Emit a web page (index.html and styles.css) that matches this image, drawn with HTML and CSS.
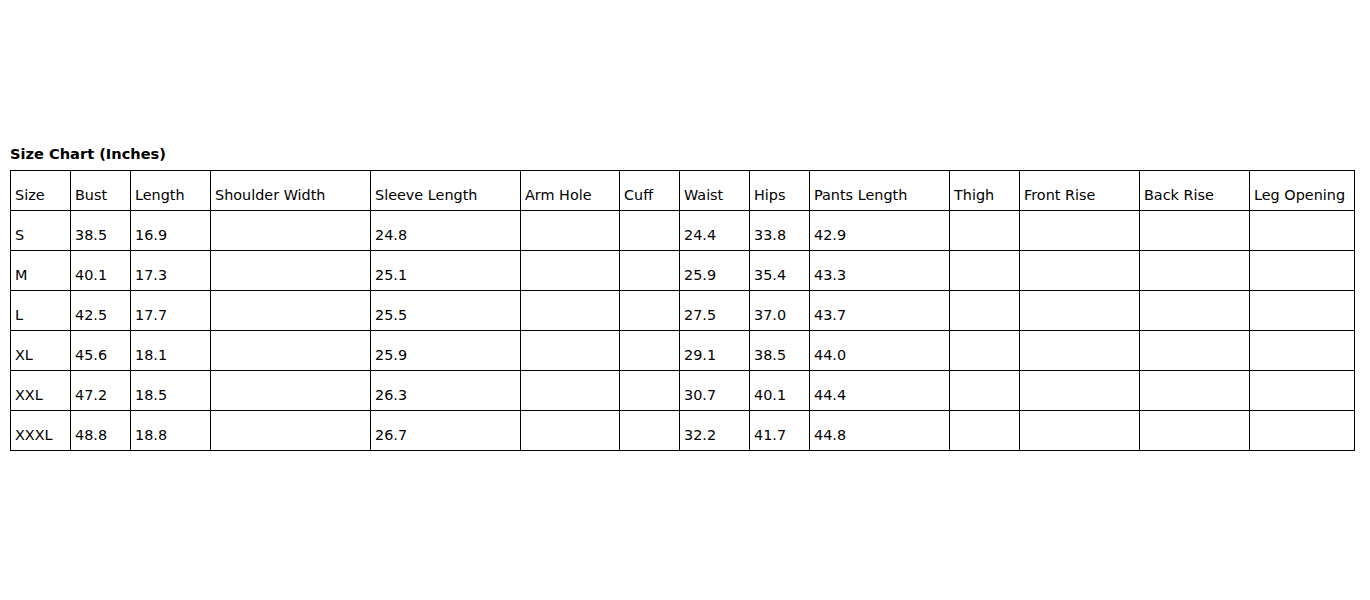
FILE: index.html
```html
<!DOCTYPE html>
<html>
<head>
<meta charset="utf-8">
<link rel="stylesheet" href="styles.css">
</head>
<body>
<div class="page">
  <div class="title">Size Chart (Inches)</div>
  <table class="chart">
    <colgroup>
      <col class="c60"><col class="c60"><col class="c80"><col class="c160"><col class="c150"><col class="c99"><col class="c60"><col class="c70"><col class="c60"><col class="c140"><col class="c70"><col class="c120"><col class="c110"><col class="c105">
    </colgroup>
    <tr><td>Size</td><td>Bust</td><td>Length</td><td>Shoulder Width</td><td>Sleeve Length</td><td>Arm Hole</td><td>Cuff</td><td>Waist</td><td>Hips</td><td>Pants Length</td><td>Thigh</td><td>Front Rise</td><td>Back Rise</td><td>Leg Opening</td></tr>
    <tr><td>S</td><td>38.5</td><td>16.9</td><td></td><td>24.8</td><td></td><td></td><td>24.4</td><td>33.8</td><td>42.9</td><td></td><td></td><td></td><td></td></tr>
    <tr><td>M</td><td>40.1</td><td>17.3</td><td></td><td>25.1</td><td></td><td></td><td>25.9</td><td>35.4</td><td>43.3</td><td></td><td></td><td></td><td></td></tr>
    <tr><td>L</td><td>42.5</td><td>17.7</td><td></td><td>25.5</td><td></td><td></td><td>27.5</td><td>37.0</td><td>43.7</td><td></td><td></td><td></td><td></td></tr>
    <tr><td>XL</td><td>45.6</td><td>18.1</td><td></td><td>25.9</td><td></td><td></td><td>29.1</td><td>38.5</td><td>44.0</td><td></td><td></td><td></td><td></td></tr>
    <tr><td>XXL</td><td>47.2</td><td>18.5</td><td></td><td>26.3</td><td></td><td></td><td>30.7</td><td>40.1</td><td>44.4</td><td></td><td></td><td></td><td></td></tr>
    <tr><td>XXXL</td><td>48.8</td><td>18.8</td><td></td><td>26.7</td><td></td><td></td><td>32.2</td><td>41.7</td><td>44.8</td><td></td><td></td><td></td><td></td></tr>
  </table>
</div>
</body>
</html>
```
FILE: styles.css
```css
html, body {
  margin: 0;
  padding: 0;
  background: #ffffff;
}
.page {
  padding: 145px 10px 0 10px;
  font-family: "DejaVu Sans", Verdana, sans-serif;
  color: #000;
}
.title {
  font-weight: bold;
  font-size: 14.6px;
  line-height: 18px;
  height: 25px;
}
.chart {
  border-collapse: collapse;
  table-layout: fixed;
  width: 1345px;
  font-size: 14.4px;
}
.chart td {
  border: 1px solid #000;
  height: 40px;
  padding: 9px 4px 0 4px;
  box-sizing: border-box;
  vertical-align: middle;
  white-space: nowrap;
  overflow: hidden;
}
.c60 { width: 60px; }
.c80 { width: 80px; }
.c160 { width: 160px; }
.c150 { width: 150px; }
.c99 { width: 99px; }
.c70 { width: 70px; }
.c140 { width: 140px; }
.c120 { width: 120px; }
.c110 { width: 110px; }
.c105 { width: 105px; }
```
